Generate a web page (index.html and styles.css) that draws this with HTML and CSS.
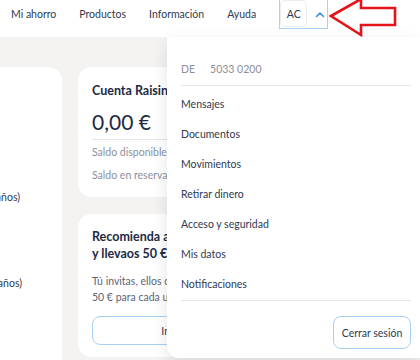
FILE: index.html
```html
<!DOCTYPE html>
<html lang="es">
<head>
  <meta charset="UTF-8">
  <meta name="viewport" content="width=device-width, initial-scale=1.0">
  <title>Mi ahorro</title>
  <link rel="stylesheet" href="styles.css">
</head>
<body>
  <header class="topbar">
    <nav class="nav">
      <a class="nav-link">Mi ahorro</a>
      <a class="nav-link">Productos</a>
      <a class="nav-link">Información</a>
      <a class="nav-link">Ayuda</a>
    </nav>
    <div class="account">
      <span class="avatar">AC</span>
      <svg class="chevron" width="10" height="7" viewBox="0 0 10 7">
        <path d="M1.5 5.5 L5 2 L8.5 5.5" fill="none" stroke="#3d8fe6" stroke-width="1.6" stroke-linecap="round" stroke-linejoin="round"/>
      </svg>
    </div>
  </header>

  <svg class="pointer" width="80" height="44" viewBox="0 0 80 44">
    <polygon points="3,18 33,1 33,10 67,10 67,27 33,27 33,37" fill="none" stroke="#e5141b" stroke-width="2.6" stroke-linejoin="miter"/>
  </svg>

  <main class="dash">
    <section class="card card-side">
      <p class="side-line">Depósito a plazo fijo (2 años)</p>
      <p class="side-line second">Depósito a plazo fijo (3 años)</p>
    </section>

    <div class="column">
      <section class="card card-balance">
        <h2 class="card-title">Cuenta Raisin</h2>
        <div class="amount">0,00 €</div>
        <p class="muted">Saldo disponible</p>
        <p class="muted">Saldo en reserva</p>
      </section>

      <section class="card card-invite">
        <h2 class="card-title">Recomienda a tus amigos<br>y llevaos 50 €</h2>
        <p class="invite-text">Tú invitas, ellos consiguen<br>50 € para cada uno</p>
        <button class="outline-btn wide">Invitar</button>
      </section>
    </div>
  </main>

  <div class="dropdown">
    <div class="iban">
      <span>DE</span>
      <span>5033 0200</span>
    </div>
    <ul class="menu">
      <li>Mensajes</li>
      <li>Documentos</li>
      <li>Movimientos</li>
      <li>Retirar dinero</li>
      <li>Acceso y seguridad</li>
      <li>Mis datos</li>
      <li>Notificaciones</li>
    </ul>
    <div class="logout">
      <button class="outline-btn">Cerrar sesión</button>
    </div>
  </div>
</body>
</html>
```

FILE: styles.css
```css
:root {
  --ink: #1c2a45;
  --text: #2e3a50;
  --muted: #8b909a;
  --line: #e3e6eb;
  --blue: #a9d0f6;
  --bg: #f4f3f1;
}
* {
  margin: 0;
  padding: 0;
  box-sizing: border-box;
}
body {
  width: 420px;
  height: 360px;
  overflow: hidden;
  background: var(--bg);
  color: var(--text);
  font-family: Lato, "Noto Sans", sans-serif;
  font-size: 10.5px;
  position: relative;
}
.topbar {
  height: 37px;
  background: white;
  display: flex;
  align-items: flex-start;
  padding-left: 11px;
  gap: 23px;
}
.nav {
  display: flex;
  gap: 23px;
  padding-top: 8px;
}
.nav-link {
  color: var(--text);
  line-height: 13px;
}
.account {
  margin-top: -1px;
  height: 30px;
  width: 49px;
  border: 1px solid var(--blue);
  display: flex;
  align-items: flex-start;
  gap: 8px;
}
.avatar {
  width: 27px;
  height: 27px;
  border: 1px solid #ececec;
  border-radius: 5px;
  display: flex;
  align-items: center;
  justify-content: center;
  color: var(--text);
}
.chevron {
  margin-top: 11px;
}
.pointer {
  position: absolute;
  left: 328px;
  top: -2px;
}
.dash {
  display: flex;
  gap: 16px;
  padding-top: 30px;
}
.card {
  background: white;
  border-radius: 14px;
}
.card-side {
  width: 62px;
  height: 293px;
  border-radius: 0 14px 0 0;
  overflow: hidden;
}
.side-line {
  white-space: nowrap;
  direction: rtl;
  margin-right: 42px;
  margin-top: 124px;
  line-height: 13px;
}
.side-line.second {
  margin-top: 73px;
  margin-right: 40px;
}
.column {
  width: 196px;
  display: flex;
  flex-direction: column;
  gap: 17px;
}
.card-balance {
  height: 130px;
  padding: 15px 0 0 14px;
}
.card-title {
  font-size: 12.5px;
  font-weight: 700;
  color: var(--ink);
  line-height: 17px;
}
.amount {
  font-size: 21px;
  color: var(--ink);
  margin-top: 11px;
  line-height: 24px;
  padding-bottom: 5px;
  border-bottom: 1px solid var(--line);
}
.muted {
  color: var(--muted);
  line-height: 13px;
  margin-top: 6px;
}
.muted + .muted {
  margin-top: 10px;
}
.card-invite {
  height: 143px;
  padding: 14px 14px 0 14px;
}
.invite-text {
  margin-top: 11px;
  line-height: 16px;
  color: #5b6475;
}
.outline-btn {
  font: inherit;
  color: var(--text);
  background: white;
  border: 1.5px solid var(--blue);
  border-radius: 8px;
  height: 29px;
  padding: 0 10px;
}
.outline-btn.wide {
  width: 100%;
  margin-top: 11px;
}
.dropdown {
  position: absolute;
  left: 167px;
  top: 37px;
  right: 0;
  height: 321px;
  background: white;
  border-radius: 0 0 0 12px;
  box-shadow: 0 6px 16px rgba(20, 30, 50, 0.12);
  padding: 26px 9px 0 14px;
}
.iban {
  display: flex;
  gap: 15px;
  color: var(--muted);
  line-height: 13px;
  padding-bottom: 9px;
  border-bottom: 1.5px solid var(--line);
}
.menu {
  list-style: none;
  padding: 3px 0 1px;
  border-bottom: 1.5px solid var(--line);
}
.menu li {
  line-height: 30px;
  color: var(--text);
}
.logout {
  display: flex;
  justify-content: flex-end;
  padding-top: 15px;
}
.logout .outline-btn {
  height: 33px;
  width: 78px;
  padding: 0;
}
```
